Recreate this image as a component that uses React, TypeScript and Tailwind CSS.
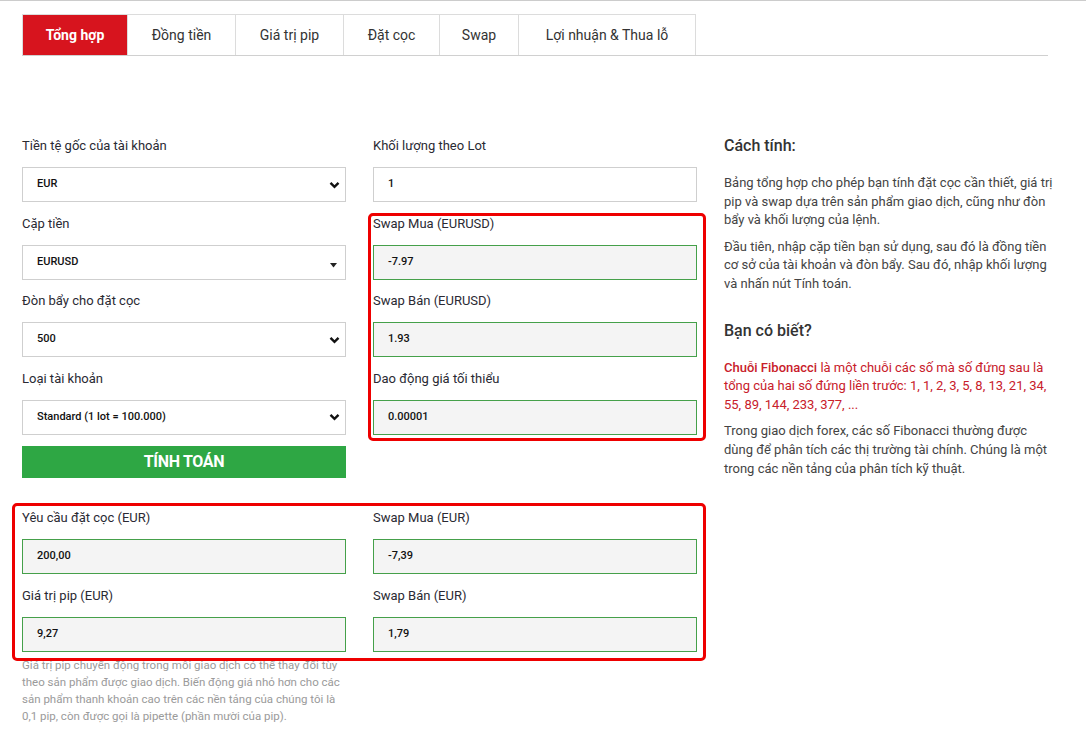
import React from "react";

const tabs: [string, string][] = [
  ["Tổng hợp", "w-[106px]"],
  ["Đồng tiền", "w-[108px]"],
  ["Giá trị pip", "w-[108px]"],
  ["Đặt cọc", "w-[96px]"],
  ["Swap", "w-[79px]"],
  ["Lợi nhuận & Thua lỗ", "w-[177px]"],
];

function Chevron() {
  return (
    <svg width="11" height="8" viewBox="0 0 11 8" className="absolute right-[5px] top-1/2 -translate-y-1/2">
      <path d="M1.5 1.8 L5.5 5.8 L9.5 1.8" fill="none" stroke="#111" strokeWidth="2.4" />
    </svg>
  );
}

function Caret() {
  return (
    <svg width="7" height="5" viewBox="0 0 7 5" className="absolute right-[8px] top-[17px]">
      <path d="M0 0 H7 L3.5 4.5 Z" fill="#222" />
    </svg>
  );
}

function Field({
  label,
  value,
  kind = "input",
}: {
  label: string;
  value: string;
  kind?: "input" | "result" | "select" | "caret";
}) {
  const box =
    kind === "result"
      ? "border-[#45a04a] bg-[#f4f4f4]"
      : "border-[#cfcfcf] bg-white";
  return (
    <div className="mb-[11.5px]">
      <div className="mb-[11px] h-5 text-[13px] leading-5 text-[#2a2a33]">{label}</div>
      <div className={`relative flex h-[35px] items-center border px-[14px] text-[11px] font-medium text-[#111] ${box}`}>
        {value}
        {kind === "select" ? <Chevron /> : null}
        {kind === "caret" ? <Caret /> : null}
      </div>
    </div>
  );
}

function Mark({ className }: { className: string }) {
  return (
    <div className={`pointer-events-none absolute rounded-[5px] border-[3px] border-[#ee0000] ${className}`} />
  );
}

export default function App() {
  return (
    <div
      className="min-h-[745px] w-[1086px] border-t border-[#cccccc] bg-white"
      style={{ fontFamily: "Roboto, 'Noto Sans', sans-serif" }}
    >
      {/* Tabs */}
      <div className="ml-[22px] mt-[13px] flex w-[1026px] border-b border-[#d0d0d0]">
        {tabs.map(([t, w], i) => (
          <div
            key={t}
            className={`flex h-[41px] items-center justify-center border-t border-r border-[#dcdcdc] text-[14px] ${w} ${
              i === 0 ? "border-l bg-[#d7141e] font-bold text-white" : "text-[#333]"
            }`}
          >
            {t}
          </div>
        ))}
      </div>

      <div className="ml-[22px] mt-[80px] flex w-[1034px] gap-[27px]">
        {/* Calculator */}
        <div className="w-[675px] shrink-0">
          <div className="grid grid-cols-2 gap-x-[27px]">
            <div className="flex flex-col">
              <Field label="Tiền tệ gốc của tài khoản" value="EUR" kind="select" />
              <Field label="Cặp tiền" value="EURUSD" kind="caret" />
              <Field label="Đòn bẩy cho đặt cọc" value="500" kind="select" />
              <Field label="Loại tài khoản" value="Standard (1 lot = 100.000)" kind="select" />
              <button className="flex h-[32px] w-full items-center justify-center bg-[#2ea744] text-[16px] font-bold tracking-[-0.3px] text-white">
                TÍNH TOÁN
              </button>
            </div>
            <div className="flex flex-col">
              <Field label="Khối lượng theo Lot" value="1" />
              <div className="relative flex flex-col">
                <Field label="Swap Mua (EURUSD)" value="-7.97" kind="result" />
                <Field label="Swap Bán (EURUSD)" value="1.93" kind="result" />
                <Field label="Dao động giá tối thiểu" value="0.00001" kind="result" />
                <Mark className="-left-[5px] -right-[9px] -top-[1px] bottom-[5px]" />
              </div>
            </div>
          </div>

          <div className="relative mt-[30px] grid grid-cols-2 gap-x-[27px]">
            <div className="flex flex-col">
              <Field label="Yêu cầu đặt cọc (EUR)" value="200,00" kind="result" />
              <Field label="Giá trị pip (EUR)" value="9,27" kind="result" />
            </div>
            <div className="flex flex-col">
              <Field label="Swap Mua (EUR)" value="-7,39" kind="result" />
              <Field label="Swap Bán (EUR)" value="1,79" kind="result" />
            </div>
            <Mark className="-left-[10px] -right-[9px] -top-[5px] bottom-[2px]" />
          </div>
          <p className="-mt-[6px] w-[324px] text-[11.5px] leading-[17px] text-[#9a9a9a]">
            Giá trị pip chuyển động trong mỗi giao dịch có thể thay đổi tùy theo sản phẩm được giao dịch. Biến động giá nhỏ hơn cho các sản phẩm thanh khoản cao trên các nền tảng của chúng tôi là 0,1 pip, còn được gọi là pipette (phần mười của pip).
          </p>
        </div>

        {/* Info */}
        <div className="w-[332px] shrink-0 text-[13px] leading-[18.6px] text-[#444]">
          <h3 className="h-5 text-[16px] font-medium leading-5 text-[#333]">Cách tính:</h3>
          <p className="mt-[18px]">
            Bảng tổng hợp cho phép bạn tính đặt cọc cần thiết, giá trị pip và swap dựa trên sản phẩm giao dịch, cũng như đòn bẩy và khối lượng của lệnh.
          </p>
          <p className="mt-[8px]">
            Đầu tiên, nhập cặp tiền bạn sử dụng, sau đó là đồng tiền cơ sở của tài khoản và đòn bẩy. Sau đó, nhập khối lượng và nhấn nút Tính toán.
          </p>
          <h3 className="mt-[27px] h-5 text-[16px] font-medium leading-5 text-[#333]">Bạn có biết?</h3>
          <p className="mt-[18px] text-[#c8202a]">
            <span className="font-medium">Chuỗi Fibonacci</span> là một chuỗi các số mà số đứng sau là tổng của hai số đứng liền trước: 1, 1, 2, 3, 5, 8, 13, 21, 34, 55, 89, 144, 233, 377, ...
          </p>
          <p className="mt-[8px]">
            Trong giao dịch forex, các số Fibonacci thường được dùng để phân tích các thị trường tài chính. Chúng là một trong các nền tảng của phân tích kỹ thuật.
          </p>
        </div>
      </div>
    </div>
  );
}
